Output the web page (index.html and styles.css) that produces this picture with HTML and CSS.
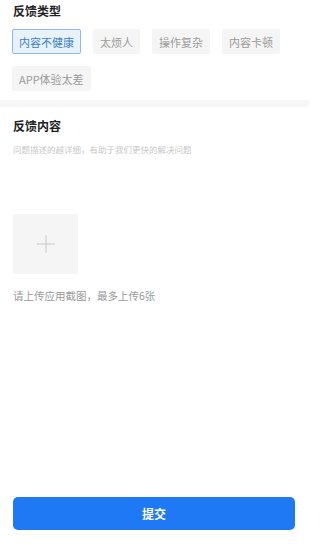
FILE: index.html
```html
<!DOCTYPE html>
<html lang="zh">
<head>
<meta charset="utf-8">
<link rel="stylesheet" href="styles.css">
</head>
<body>
<div class="page">
  <section class="types">
    <h2 class="title">反馈类型</h2>
    <div class="tags">
      <span class="tag active">内容不健康</span>
      <span class="tag">太烦人</span>
      <span class="tag">操作复杂</span>
      <span class="tag">内容卡顿</span>
      <span class="tag">APP体验太差</span>
    </div>
  </section>
  <div class="divider"></div>
  <section class="content">
    <h2 class="title">反馈内容</h2>
    <div class="placeholder">问题描述的越详细，有助于我们更快的解决问题</div>
    <div class="upload">
      <svg width="20" height="20" viewBox="0 0 20 20"><path d="M10 1V19M1 10H19" stroke="#c8c8c8" stroke-width="1" fill="none"/></svg>
    </div>
    <div class="hint">请上传应用截图，最多上传6张</div>
  </section>
  <div class="footer">
    <button class="submit">提交</button>
  </div>
</div>
</body>
</html>
```
FILE: styles.css
```css
html, body {
  margin: 0;
  padding: 0;
  background: #fff;
}
body {
  font-family: "Noto Sans CJK SC", "Noto Sans", sans-serif;
}
.page {
  width: 309px;
  height: 550px;
  display: flex;
  flex-direction: column;
}
.types {
  padding: 2px 12px 0;
  height: 98px;
  box-sizing: border-box;
}
.title {
  margin: 0;
  font-size: 12px;
  line-height: 17px;
  font-weight: 700;
  color: #222;
  padding-left: 1px;
}
.tags {
  display: flex;
  flex-wrap: wrap;
  column-gap: 12px;
  row-gap: 12px;
  margin-top: 10px;
}
.tag {
  display: inline-flex;
  align-items: center;
  height: 25px;
  box-sizing: border-box;
  padding: 0 6px;
  border: 1px solid transparent;
  border-radius: 2px;
  background: #f5f5f5;
  color: #9a9a9a;
  font-size: 11px;
}
.tag.active {
  background: #e8f2fd;
  border-color: #8dbbe8;
  color: #3d7fc6;
}
.divider {
  height: 7px;
  background: #f7f7f7;
  margin-top: 2px;
}
.content {
  padding: 10px 12px 0;
}
.placeholder {
  margin-top: 9px;
  font-size: 8.5px;
  line-height: 12px;
  color: #c8c8c8;
  padding-left: 1px;
}
.upload {
  margin-top: 59px;
  margin-left: 1px;
  width: 65px;
  height: 60px;
  background: #f5f5f5;
  border-radius: 3px;
  display: flex;
  align-items: center;
  justify-content: center;
}
.hint {
  margin-top: 15px;
  font-size: 10.5px;
  line-height: 14px;
  color: #999;
  padding-left: 1px;
}
.footer {
  margin-top: auto;
  padding: 0 14px 20px 13px;
}
.submit {
  display: block;
  width: 100%;
  height: 33px;
  border: none;
  border-radius: 5px;
  background: #1f78f4;
  color: #fff;
  font-family: "Noto Sans CJK SC", sans-serif;
  font-size: 12px;
  font-weight: 700;
}
```
